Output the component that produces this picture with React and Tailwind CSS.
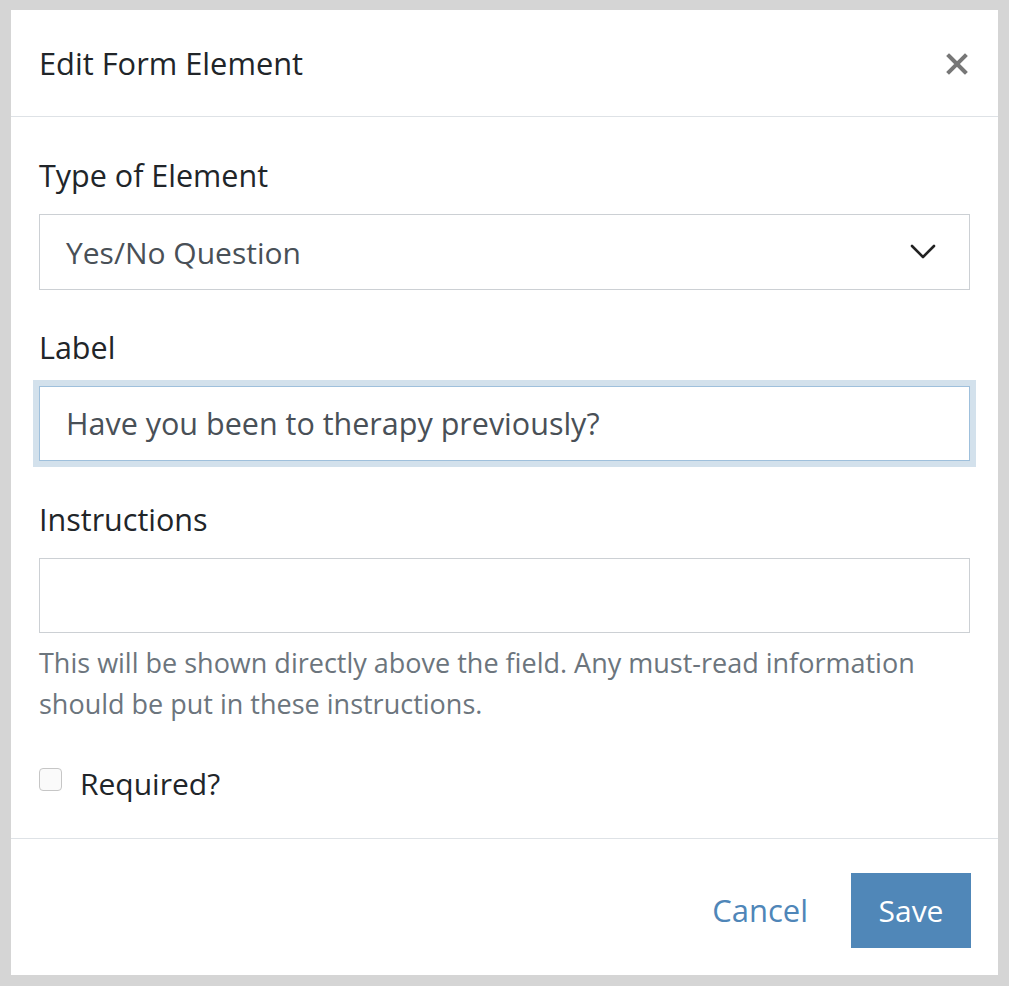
import React from 'react'

function Chevron() {
  return (
    <svg width="26" height="16" viewBox="0 0 26 16" fill="none" aria-hidden="true">
      <path d="M2 2 L13 13 L24 2" stroke="#222" strokeWidth="2.6" strokeLinecap="round" strokeLinejoin="round" />
    </svg>
  )
}

function CloseIcon() {
  return (
    <svg width="22" height="22" viewBox="0 0 22 22" fill="none" aria-hidden="true">
      <path d="M3 3 L19 19 M19 3 L3 19" stroke="#777" strokeWidth="4" strokeLinecap="square" />
    </svg>
  )
}

export default function App() {
  return (
    <div className="min-h-[986px] bg-[#d5d5d5] pt-[10px] px-[11px] pb-[11px] font-['Open_Sans',sans-serif]">
      <div className="bg-white h-[965px] flex flex-col">
        {/* header */}
        <div className="h-[107px] px-[28px] flex items-center justify-between border-b border-[#dee2e6]">
          <h1 className="text-[30.8px] text-[#212529]">Edit Form Element</h1>
          <button className="mr-[2px] mt-[2px]">
            <CloseIcon />
          </button>
        </div>

        {/* body */}
        <div className="flex-1 px-[28px] pt-[37px]">
          <div>
            <label className="block text-[30.5px] leading-[42px] text-[#212529] mb-[18px]">Type of Element</label>
            <div className="h-[76px] border border-[#ccd0d4] flex items-center justify-between pl-[26px] pr-[33px]">
              <span className="text-[30px] text-[#495057]">Yes/No Question</span>
              <Chevron />
            </div>
          </div>

          <div className="mt-[36px]">
            <label className="block text-[30.5px] leading-[42px] text-[#212529] mb-[18px]">Label</label>
            <div className="h-[75px] border border-[#9fc0dc] shadow-[0_0_0_6px_#d3e1ec] flex items-center pl-[26px]">
              <span className="text-[30.5px] text-[#495057]">Have you been to therapy previously?</span>
            </div>
          </div>

          <div className="mt-[37px]">
            <label className="block text-[30.5px] leading-[42px] text-[#212529] mb-[18px]">Instructions</label>
            <div className="h-[75px] border border-[#ccd0d4]" />
            <p className="mt-[9px] text-[27px] leading-[41px] text-[#6c757d]">
              This will be shown directly above the field. Any must-read information
              <br />
              should be put in these instructions.
            </p>
          </div>

          <div className="mt-[37px] flex items-center h-[45px]">
            <span className="w-[23px] h-[23px] border border-[#c6c6c6] rounded-[4px] bg-[#fafafa] -mt-[8px]" />
            <span className="ml-[18px] text-[30px] text-[#212529]">Required?</span>
          </div>
        </div>

        {/* footer */}
        <div className="h-[137px] pt-[6px] border-t border-[#dee2e6] flex items-center justify-end pr-[27px]">
          <button className="text-[31px] text-[#4f86b8] mr-[43px]">Cancel</button>
          <button className="w-[120px] h-[75px] bg-[#5087b8] text-white text-[30px]">Save</button>
        </div>
      </div>
    </div>
  )
}
